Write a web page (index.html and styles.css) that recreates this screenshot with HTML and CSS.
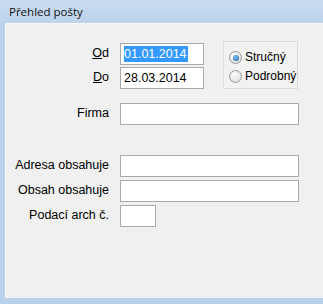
FILE: index.html
```html
<!DOCTYPE html>
<html>
<head>
<meta charset="utf-8">
<link rel="stylesheet" href="styles.css">
</head>
<body>
<div class="window">
  <div class="titlebar">Přehled pošty</div>
  <div class="frame">
    <div class="content">
      <div class="top">
        <div class="dates">
          <div class="row">
            <label class="lbl"><u>O</u>d</label>
            <div class="field date"><span class="sel">01.01.2014</span></div>
          </div>
          <div class="row">
            <label class="lbl"><u>D</u>o</label>
            <div class="field date">28.03.2014</div>
          </div>
        </div>
        <div class="radios">
          <div class="radio"><span class="dot on"></span><span>Stručný</span></div>
          <div class="radio"><span class="dot"></span><span>Podrobný</span></div>
        </div>
      </div>
      <div class="row firma">
        <label class="lbl">Firma</label>
        <div class="field wide"></div>
      </div>
      <div class="row adresa">
        <label class="lbl">Adresa obsahuje</label>
        <div class="field wide"></div>
      </div>
      <div class="row obsah">
        <label class="lbl">Obsah obsahuje</label>
        <div class="field wide"></div>
      </div>
      <div class="row obsah">
        <label class="lbl">Podací arch č.</label>
        <div class="field small"></div>
      </div>
    </div>
  </div>
</div>
</body>
</html>
```
FILE: styles.css
```css
html, body {
  margin: 0;
  padding: 0;
}
body {
  width: 323px;
  height: 304px;
  overflow: hidden;
  font-family: "Liberation Sans", Arial, sans-serif;
  font-size: 12.5px;
  color: #000;
}
.window {
  width: 323px;
  height: 304px;
  background: #b9d1ea;
  display: flex;
  flex-direction: column;
}
.titlebar {
  height: 23px;
  box-sizing: border-box;
  padding: 4px 0 0 9px;
  font-family: "Open Sans", "Noto Sans", sans-serif;
  font-size: 11.5px;
  color: #111;
  background: linear-gradient(#c9dcf1, #bcd3eb);
}
.frame {
  height: 275px;
  padding-left: 5px;
  background: #b9d1ea;
}
.content {
  height: 275px;
  box-sizing: border-box;
  background: #f0f0f0;
  border-top: 1px solid #f7f7f7;
  border-left: 1px solid #f7f7f7;
  padding-top: 19px;
  display: flex;
  flex-direction: column;
}
.top {
  display: flex;
  align-items: flex-start;
}
.dates {
  display: flex;
  flex-direction: column;
  gap: 2px;
}
.row {
  display: flex;
  align-items: center;
}
.lbl {
  width: 103px;
  text-align: right;
  margin-right: 11px;
  position: relative;
  top: -1px;
}
.field {
  height: 22px;
  box-sizing: border-box;
  background: #fff;
  border: 1px solid #a9a9a9;
  display: flex;
  align-items: center;
  padding-left: 3px;
}
.date { width: 84px; }
.wide { width: 179px; }
.small { width: 36px; }
.sel {
  background: #3399ff;
  color: #fff;
  padding: 1px 1px 1px 0;
}
.radios {
  margin-left: 19px;
  margin-top: -2px;
  width: 75px;
  height: 48px;
  box-sizing: border-box;
  border: 1px solid #dcdcdc;
  background: #f2f2f2;
  padding: 9px 0 0 5px;
  display: flex;
  flex-direction: column;
  gap: 6px;
  font-size: 12px;
}
.radio {
  display: flex;
  align-items: center;
  gap: 3px;
  line-height: 13px;
}
.dot {
  width: 11px;
  height: 11px;
  border-radius: 50%;
  border: 1px solid #9a9a9a;
  background: radial-gradient(circle at 40% 35%, #fdfdfd, #d6d6d6);
  display: flex;
  align-items: center;
  justify-content: center;
}
.dot.on::after {
  content: "";
  width: 6px;
  height: 6px;
  border-radius: 50%;
  background: radial-gradient(circle at 40% 35%, #7fc4f5, #1a5c9e);
}
.firma { margin-top: 14px; }
.adresa { margin-top: 30px; }
.obsah { margin-top: 3px; }
```
